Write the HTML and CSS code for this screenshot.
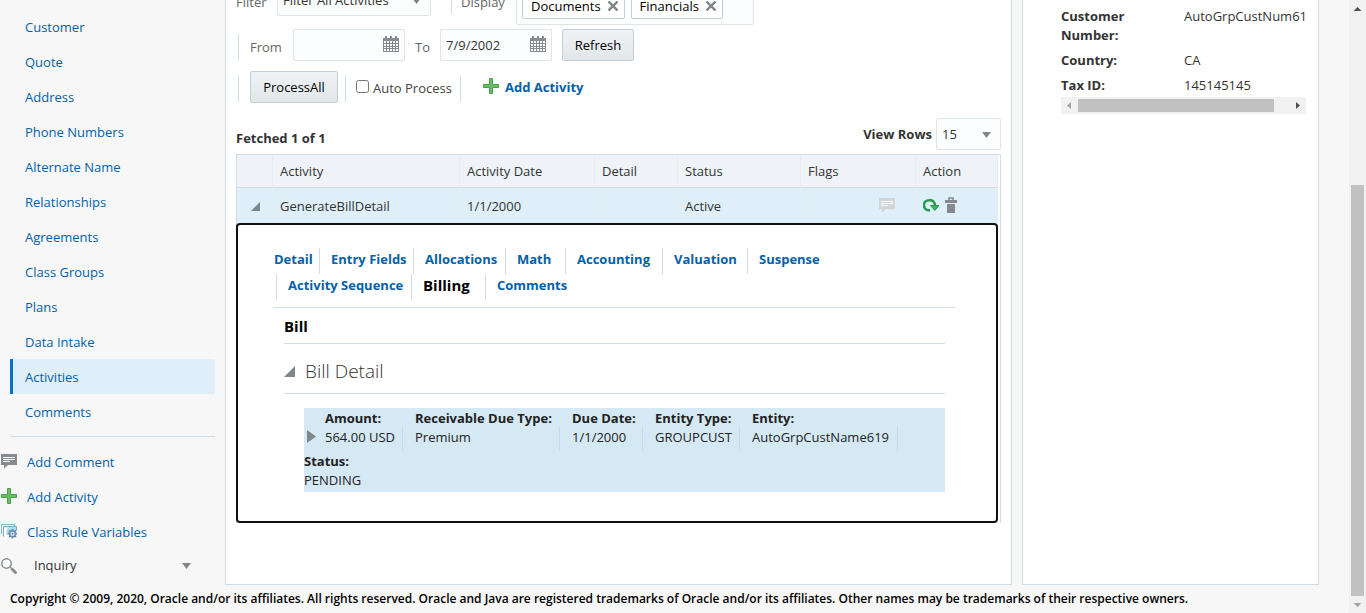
FILE: index.html
```html
<!DOCTYPE html>
<html lang="en">
<head>
<meta charset="utf-8">
<title>Activities</title>
<link rel="stylesheet" href="styles.css">
</head>
<body>
<svg class="defs" aria-hidden="true">
  <symbol id="plus" viewBox="0 0 16 16"><path d="M6.500.5h3v6h6v3h-6v6h-3v-6h-6v-3h6z" fill="#66bf66" stroke="#4c9e4a" stroke-linejoin="round"/></symbol>
  <symbol id="comment" viewBox="0 0 16 16"><path d="M0 1h16v11H7l-4 3.500V12H0z" fill="currentColor"/><path d="M2 4.500h12M2 6.500h12M2 8.500h7" stroke="#fff" stroke-width="1"/></symbol>
  <symbol id="calendar" viewBox="0 0 16 16"><path d="M0 2h2V0h2v2h3V0h2v2h3V0h2v2h2v14H0z" fill="#878b8f"/><path d="M1 5h14v10H1z" fill="#fff"/><path d="M0 7.500h16M0 10.500h16M0 12.500h16M3.500 5v10M6.500 5v10M9.500 5v10M12.500 5v10" stroke="#878b8f"/></symbol>
  <symbol id="close" viewBox="0 0 10 10"><path d="M.5.5l9 9M9.500.5l-9 9" stroke="#81868b" stroke-width="2.400"/></symbol>
  <symbol id="caret" viewBox="0 0 9 6"><path d="M0 0h9L4.500 6z" fill="#81868b"/></symbol>
  <symbol id="open" viewBox="0 0 10 10"><path d="M10 0v10H0z" fill="#81868b"/></symbol>
</svg>
<div class="shell">
  <div class="page">
    <div class="columns">
      <aside class="sidebar">
        <nav class="nav">
          <a href="#">Customer</a>
          <a href="#">Quote</a>
          <a href="#">Address</a>
          <a href="#">Phone Numbers</a>
          <a href="#">Alternate Name</a>
          <a href="#">Relationships</a>
          <a href="#">Agreements</a>
          <a href="#">Class Groups</a>
          <a href="#">Plans</a>
          <a href="#">Data Intake</a>
          <a href="#" class="current">Activities</a>
          <a href="#">Comments</a>
        </nav>
        <div class="tools">
          <a href="#"><svg class="icon comment"><use href="#comment"/></svg>Add Comment</a>
          <a href="#"><svg class="icon"><use href="#plus"/></svg>Add Activity</a>
          <a href="#"><svg class="icon" viewBox="0 0 16 16"><path d="M.5 11V1.500h13V3" fill="#eef6fa" stroke="#8db4c8"/><path d="M2.500 13.500v-10h13v4" fill="#aeddf3" stroke="#7fabc2"/><path d="M3 13V4.500h4C5 7 5 10 5.500 13z" fill="#fff"/><path d="M11.500 6v9.500M6.800 10.700h9.200M8.200 7.400l6.600 6.600M14.800 7.400l-6.600 6.600" stroke="#6585a8" stroke-width="1.800"/><circle cx="11.500" cy="10.700" r="2.800" fill="#dceaf5" stroke="#6585a8" stroke-width="1.200"/><circle cx="11.500" cy="10.700" r="1" fill="#6585a8"/></svg>Class Rule Variables</a>
          <button type="button" class="inquiry"><svg class="icon" viewBox="0 0 16 16"><circle cx="5.500" cy="5.500" r="4.700" fill="#fff" stroke="#878b8f" stroke-width="1.500"/><path d="M9 9l1.500 1.500" stroke="#878b8f" stroke-width="1.500"/><path d="M10.500 10.500l5 5" stroke="#878b8f" stroke-width="2.800"/></svg><span>Inquiry</span><svg class="caret"><use href="#caret"/></svg></button>
        </div>
      </aside>

      <main class="panel main">
        <div class="filters">
          <div class="bar bar-filter">
            <label for="filter">Filter</label>
            <div class="picker picker-filter"><select id="filter"><option>Filter All Activities</option></select><svg class="caret"><use href="#caret"/></svg></div>
            <div class="display"><span>Display</span></div>
            <div class="chips">
              <span class="chip">Documents<button type="button" aria-label="Remove Documents"><svg><use href="#close"/></svg></button></span>
              <span class="chip">Financials<button type="button" aria-label="Remove Financials"><svg><use href="#close"/></svg></button></span>
            </div>
          </div>
          <div class="bar bar-dates">
            <span class="rule"></span>
            <label for="from" class="from">From</label>
            <div class="date"><input id="from" type="text"><svg class="icon"><use href="#calendar"/></svg></div>
            <label for="to" class="to">To</label>
            <div class="date"><input id="to" type="text" value="7/9/2002"><svg class="icon"><use href="#calendar"/></svg></div>
            <button type="button" class="button refresh">Refresh</button>
          </div>
          <div class="bar bar-process">
            <span class="rule"></span>
            <button type="button" class="button process">ProcessAll</button>
            <span class="auto"><input id="auto" type="checkbox"><label for="auto">Auto Process</label></span>
            <a href="#" class="add"><svg class="icon"><use href="#plus"/></svg>Add Activity</a>
          </div>
        </div>

        <div class="summary">
          <span class="fetched">Fetched 1 of 1</span>
          <label for="rows">View Rows</label>
          <div class="picker picker-rows"><select id="rows"><option>15</option></select><svg class="caret"><use href="#caret"/></svg></div>
        </div>

        <div class="grid">
          <table class="activities">
            <colgroup><col class="c-toggle"><col class="c-activity"><col class="c-date"><col class="c-detail"><col class="c-status"><col class="c-flags"><col></colgroup>
            <thead><tr><th></th><th>Activity</th><th>Activity Date</th><th>Detail</th><th>Status</th><th>Flags</th><th>Action</th></tr></thead>
            <tbody><tr>
              <td class="toggle"><button type="button" aria-label="Collapse"><svg class="open-small"><use href="#open"/></svg></button></td>
              <td>GenerateBillDetail</td><td>1/1/2000</td><td></td><td>Active</td>
              <td class="flags"><svg class="icon"><use href="#comment"/></svg></td>
              <td class="actions"><div>
                <button type="button" aria-label="Reprocess"><svg class="icon" viewBox="0 0 16 16"><path d="M7 13.300H6A5 5 0 0 1 6 3.200C9.500 2.600 12 5 12 9" fill="none" stroke="#2a9a52" stroke-width="2.600"/><path d="M7.500 8.500H16L11.800 13.500z" fill="#3bb55f" stroke="#27994f"/></svg></button>
                <button type="button" aria-label="Delete"><svg class="trash" viewBox="0 0 12 16"><path d="M0 3h12v3H0zM2 7h8v9H2z" fill="#85898d"/><path d="M4 3.500V1h4v2.500" fill="none" stroke="#85898d" stroke-width="1.500"/></svg></button>
              </div></td>
            </tr></tbody>
          </table>

          <section class="detail">
            <nav class="tabs tabs-first">
              <a href="#">Detail</a><a href="#">Entry Fields</a><a href="#">Allocations</a><a href="#">Math</a><a href="#">Accounting</a><a href="#">Valuation</a><a href="#">Suspense</a>
            </nav>
            <nav class="tabs tabs-second">
              <a href="#">Activity Sequence</a><a href="#" class="selected">Billing</a><a href="#">Comments</a>
            </nav>
            <div class="bill">
              <h2>Bill</h2>
              <h3><svg class="open-large"><use href="#open"/></svg>Bill Detail</h3>
              <div class="card">
                <div class="facts">
                  <button type="button" aria-label="Expand"><svg viewBox="0 0 9 13"><path d="M0 0l9 6.500L0 13z" fill="#81868b"/></svg></button>
                  <div class="fact"><b>Amount:</b><span>564.00 USD</span></div>
                  <div class="fact"><b>Receivable Due Type:</b><span>Premium</span></div>
                  <div class="fact"><b>Due Date:</b><span>1/1/2000</span></div>
                  <div class="fact"><b>Entity Type:</b><span>GROUPCUST</span></div>
                  <div class="fact"><b>Entity:</b><span>AutoGrpCustName619</span></div>
                </div>
                <div class="status"><b>Status:</b><span>PENDING</span></div>
              </div>
            </div>
          </section>
        </div>
      </main>

      <aside class="panel customer">
        <dl>
          <dt>Customer Number:</dt><dd>AutoGrpCustNum61</dd>
          <dt>Country:</dt><dd>CA</dd>
          <dt>Tax ID:</dt><dd>145145145</dd>
        </dl>
        <div class="hscroll" aria-hidden="true">
          <svg viewBox="0 0 17 16"><path d="M10 4.500v7L6 8z" fill="#a3a3a3"/></svg>
          <span class="htrack"><span class="hthumb"></span></span>
          <svg viewBox="0 0 17 16"><path d="M7 4.500v7L11 8z" fill="#505050"/></svg>
        </div>
      </aside>
    </div>
    <footer class="footer">Copyright © 2009, 2020, Oracle and/or its affiliates. All rights reserved. Oracle and Java are registered trademarks of Oracle and/or its affiliates. Other names may be trademarks of their respective owners.</footer>
  </div>
  <div class="vscroll" aria-hidden="true">
    <svg viewBox="0 0 17 17"><path d="M4.500 11h8l-4-4z" fill="#505050"/></svg>
    <span class="vthumb"></span>
    <svg viewBox="0 0 17 17"><path d="M4.500 7h8l-4 4z" fill="#a3a3a3"/></svg>
  </div>
</div>
</body>
</html>
```

FILE: styles.css
```css
* { box-sizing: border-box; }

body {
  margin: 0;
  font: 13px/19px "Open Sans", "Noto Sans", sans-serif;
  color: #333;
}

svg { display: block; flex: none; }
a { color: #0461a8; text-decoration: none; }
button, input, select { font: inherit; color: inherit; margin: 0; }
button { padding: 0; border: 0; background: none; }
b { font-weight: 700; }

.defs { position: absolute; width: 0; height: 0; }
.icon { width: 16px; height: 16px; }
.caret { width: 9px; height: 6px; }

.shell { display: flex; height: 100vh; overflow: hidden; }

.page {
  flex: 1;
  min-width: 0;
  display: flex;
  flex-direction: column;
  background: linear-gradient(45deg, #f9f9f9 25%, #f5f5f5 25% 50%, #f9f9f9 50% 75%, #f5f5f5 75%) 0 0 / 4px 4px;
}

.columns {
  flex: 1;
  min-height: 0;
  display: grid;
  grid-template-columns: 225px minmax(0, 1fr) 297px;
  padding-right: 30px;
}

.panel {
  background: #fff;
  border: 1px solid #cfdde6;
  border-top: 0;
}

.footer {
  height: 28px;
  padding-left: 10px;
  font-size: 12px;
  line-height: 28px;
  font-weight: 600;
  color: #000;
  white-space: nowrap;
}

/* Sidebar */
.nav {
  margin: 0 10px;
  padding: 9px 0 7px;
  border-bottom: 1px solid #cfdde6;
}
.nav a {
  display: block;
  padding: 2px 0 0 15px;
  line-height: 33px;
}
.nav .current {
  padding-left: 12px;
  border-left: 3px solid #0572ce;
  background: #deeffa;
}
.tools { padding: 8px 30px 0 1px; }
.tools a {
  display: flex;
  align-items: center;
  gap: 10px;
  height: 35px;
}
.tools a .icon { margin-bottom: 4px; }
.comment { color: #878b8f; }
.inquiry {
  display: flex;
  align-items: center;
  gap: 17px;
  width: 100%;
  height: 31px;
  padding-right: 4px;
}
.inquiry .caret { margin-left: auto; }

/* Filters */
.main { padding: 0 10px; margin-right: 10px; }
.bar { display: flex; align-items: center; }
.bar label { color: #666; }
.bar-filter { height: 41px; margin-top: -16px; align-items: flex-start; }
.bar-filter > label { width: 41px; padding-top: 9px; }
.display {
  height: 30px;
  margin-left: 20px;
  padding: 9px 10px 0 9px;
  width: 65px;
  border-left: 1px solid #cfdde6;
  color: #666;
}
.chips {
  display: flex;
  gap: 6px;
  align-items: flex-end;
  width: 238px;
  height: 41px;
  padding: 5px;
  border: 1px solid #dfe4e7;
  border-radius: 2px;
  background: #fcfdfe;
}
.chip {
  display: flex;
  align-items: center;
  gap: 7px;
  height: 26px;
  padding: 0 6px 0 8px;
  border: 1px solid #c4ced7;
  border-radius: 2px;
  background: #fff;
  color: #000;
}
.chip svg { width: 10px; height: 10px; }

.picker {
  position: relative;
  height: 32px;
}
.picker select {
  appearance: none;
  width: 100%;
  height: 100%;
  padding: 0 20px 0 5px;
  border: 1px solid #dfe4e7;
  border-radius: 2px;
  background: #fcfdfe;
}
.picker .caret { position: absolute; right: 10px; top: 14px; }
.picker-filter { width: 154px; }
.picker-rows { width: 65px; }

.rule { height: 26px; border-left: 1px solid #cfdde6; margin: 4px 11px 0 2px; }
.bar-dates { margin-top: 4px; height: 32px; }
.bar-dates label { padding-top: 4px; }
.from { width: 43px; }
.to { width: 35px; padding-left: 10px; }
.date {
  display: flex;
  align-items: center;
  width: 112px;
  height: 32px;
  padding: 0 5px;
  border: 1px solid #dfe4e7;
  border-radius: 2px;
  background: #fcfdfe;
}
.date input {
  flex: 1;
  min-width: 0;
  padding: 0;
  border: 0;
  background: none;
  outline: 0;
}
.date .icon { margin-bottom: 2px; }
.button {
  height: 32px;
  border: 1px solid #c4ced7;
  border-radius: 2px;
  background: linear-gradient(#f0f3f5, #e1e6e9);
  color: #000;
}
.refresh { width: 72px; margin-left: 10px; }
.process { width: 88px; }
.bar-process { margin-top: 10px; }
.auto {
  display: flex;
  align-items: center;
  gap: 4px;
  height: 26px;
  width: 116px;
  margin: 4px 22px 0 7px;
  padding: 0 0 2px 10px;
  border: solid #cfdde6;
  border-width: 0 1px;
}
.auto input { width: 13px; height: 13px; margin-bottom: 4px; }
.auto label { color: #444; white-space: nowrap; }
.add {
  display: flex;
  gap: 6px;
  font-weight: 700;
}

/* Activity table */
.summary {
  display: flex;
  align-items: center;
  gap: 4px;
  margin-top: 15px;
  font-weight: 700;
}
.summary .picker { font-weight: 400; }
.fetched { margin-right: auto; padding-top: 8px; }
.grid {
  margin-top: 4px;
  padding-right: 2px;
  border: 1px solid #cfdde6;
  border-bottom: 0;
}
.activities {
  width: 100%;
  table-layout: fixed;
  border-collapse: separate;
  border-spacing: 0;
}
.c-toggle { width: 36px; }
.c-activity { width: 187px; }
.c-date { width: 135px; }
.c-detail { width: 83px; }
.c-status { width: 123px; }
.c-flags { width: 115px; }
.activities th, .activities td {
  height: 33px;
  padding: 0 7px;
  border-right: 1px solid #e9ecef;
  text-align: left;
  font-weight: 400;
  white-space: nowrap;
}
.activities th { background: #eff3f8; border-bottom: 1px solid #cfdde6; }
.activities td { height: 35px; padding-top: 2px; background: #deeffa; }
.toggle button { display: block; margin-left: 7px; }
.open-small { width: 9px; height: 9px; }
.activities .flags, .activities .actions { padding: 0 7px 2px; }
.flags .icon { margin-left: 71px; color: #d2d4d6; }
.actions div { display: flex; gap: 6px; }
.trash { width: 12px; height: 16px; }

/* Expanded row */
.detail {
  margin-left: -1px;
  padding: 23px 41px 29px 36px;
  border: 2px solid #111;
  border-radius: 4px;
  background: #fff;
}
.tabs { display: grid; line-height: 22px; font-weight: 700; }
.tabs a {
  height: 26px;
  padding-left: 11px;
  border-left: 1px solid #cfdde6;
  white-space: nowrap;
}
.tabs-first { grid-template-columns: 45px 94px 92px 60px 97px 85px 1fr; }
.tabs-first a:first-child { padding-left: 0; border-left: 0; }
.tabs-second { grid-template-columns: 135px 74px 1fr; padding-left: 2px; }
.tabs .selected { font-size: 15px; color: #000; }
.bill {
  margin-top: 7px;
  padding: 0 10px;
  border-top: 1px solid #cfdde6;
}
.bill h2, .bill h3 { margin: 0; border-bottom: 1px solid #cfdde6; }
.bill h2 { height: 36px; font-size: 15px; line-height: 36px; color: #000; }
.bill h3 {
  display: flex;
  align-items: center;
  gap: 10px;
  height: 50px;
  padding-top: 6px;
  font-size: 19px;
  font-weight: 300;
}
.open-large { width: 11px; height: 11px; }
.card {
  margin: 14px 0 0 20px;
  padding: 1px 0 2px;
  background: #d5e9f5;
  color: #222;
}
.card b, .card span { display: block; }
.facts {
  display: grid;
  grid-template-columns: 21px 78px 157px 83px 97px 158px;
  height: 43px;
}
.facts button { width: 9px; height: 13px; margin: 21px 0 0 3px; }
.facts button svg { width: 9px; height: 13px; }
.fact {
  white-space: nowrap;
  background: linear-gradient(#c8dce8, #c8dce8) right 17px / 1px 25px no-repeat;
  background-position: right 0 top 17px;
}
.fact + .fact { padding-left: 12px; }

/* Customer panel */
.customer { padding: 7px 12px 0 38px; }
.customer dl {
  display: grid;
  grid-template-columns: 112px minmax(0, 1fr);
  gap: 6px 11px;
  margin: 0;
}
.customer dt { padding-right: 40px; font-weight: 700; }
.customer dd { margin: 0; }
.hscroll { display: flex; height: 17px; margin-top: 2px; background: #f1f1f1; }
.hscroll svg { width: 17px; height: 17px; }
.htrack { flex: 1; padding: 2px 0; }
.hthumb { display: block; width: 93%; height: 13px; background: #c1c1c1; }

/* Page scrollbar */
.vscroll {
  flex: none;
  display: flex;
  flex-direction: column;
  justify-content: flex-end;
  width: 17px;
  background: #f1f1f1;
}
.vscroll svg { width: 17px; height: 17px; }
.vscroll svg:first-child { margin-bottom: auto; }
.vthumb { height: 67%; margin: 0 2px; background: #c1c1c1; }
```
